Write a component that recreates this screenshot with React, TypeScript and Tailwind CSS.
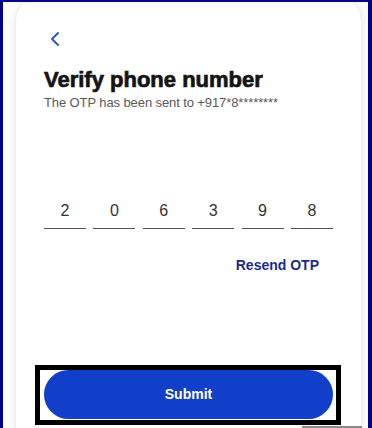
import React, { useState } from "react";

const digits = ["2", "0", "6", "3", "9", "8"];

const App = () => {
  const [otp] = useState(digits);

  return (
    <div
      className="relative w-[372px] h-[428px] overflow-hidden bg-[#02028c] pl-[3px] pr-[4px] pt-[2px]"
      style={{ fontFamily: '"Liberation Sans", Arial, sans-serif' }}
    >
      <div className="h-full overflow-hidden bg-white pl-[13px] pr-[7px]">
        <div className="-mt-[6px] h-[440px] rounded-t-[26px] bg-white px-[28px] pt-[36px] shadow-[0_0_10px_rgba(0,0,0,0.13)]">
          {/* back */}
          <button className="ml-[6px] block h-[14px] w-[10px]">
            <svg width="10" height="14" viewBox="0 0 10 14" fill="none">
              <polyline
                points="8,1 2,7 8,13"
                stroke="#2450d2"
                strokeWidth="1.8"
                strokeLinecap="round"
                strokeLinejoin="round"
              />
            </svg>
          </button>

          <h1 className="mt-[21px] text-[22px] font-bold leading-[26px] tracking-[0px] text-[#141414] [-webkit-text-stroke:0.7px_#141414]">
            Verify phone number
          </h1>
          <p className="mt-[2px] text-[13px] leading-[16px] tracking-[-0.1px] text-[#5a5a5a]">
            The OTP has been sent to +917*8********
          </p>

          {/* otp inputs */}
          <div className="mt-[88px] flex justify-between">
            {otp.map((d, i) => (
              <div
                key={i}
                className="h-[30px] w-[42px] border-b border-[#555] text-center text-[16px] leading-[24px] text-[#333]"
              >
                {d}
              </div>
            ))}
          </div>

          <div className="mt-[26px] flex justify-end pr-[14px]">
            <button className="text-[14px] font-bold leading-[20px] text-[#1b2a8e]">
              Resend OTP
            </button>
          </div>

          <div className="-ml-[9px] -mr-[8px] mt-[90px] border-[5px] border-black bg-white pb-[1px] pl-[4px] pr-[3px]">
            <button className="h-[49px] w-full rounded-full bg-[#113fc9] text-[14px] font-bold text-white">
              Submit
            </button>
          </div>
        </div>
      </div>
      <div className="absolute bottom-0 right-[10px] h-[2px] w-[60px] bg-[#8a8a8a]" />
    </div>
  );
};

export default App;
